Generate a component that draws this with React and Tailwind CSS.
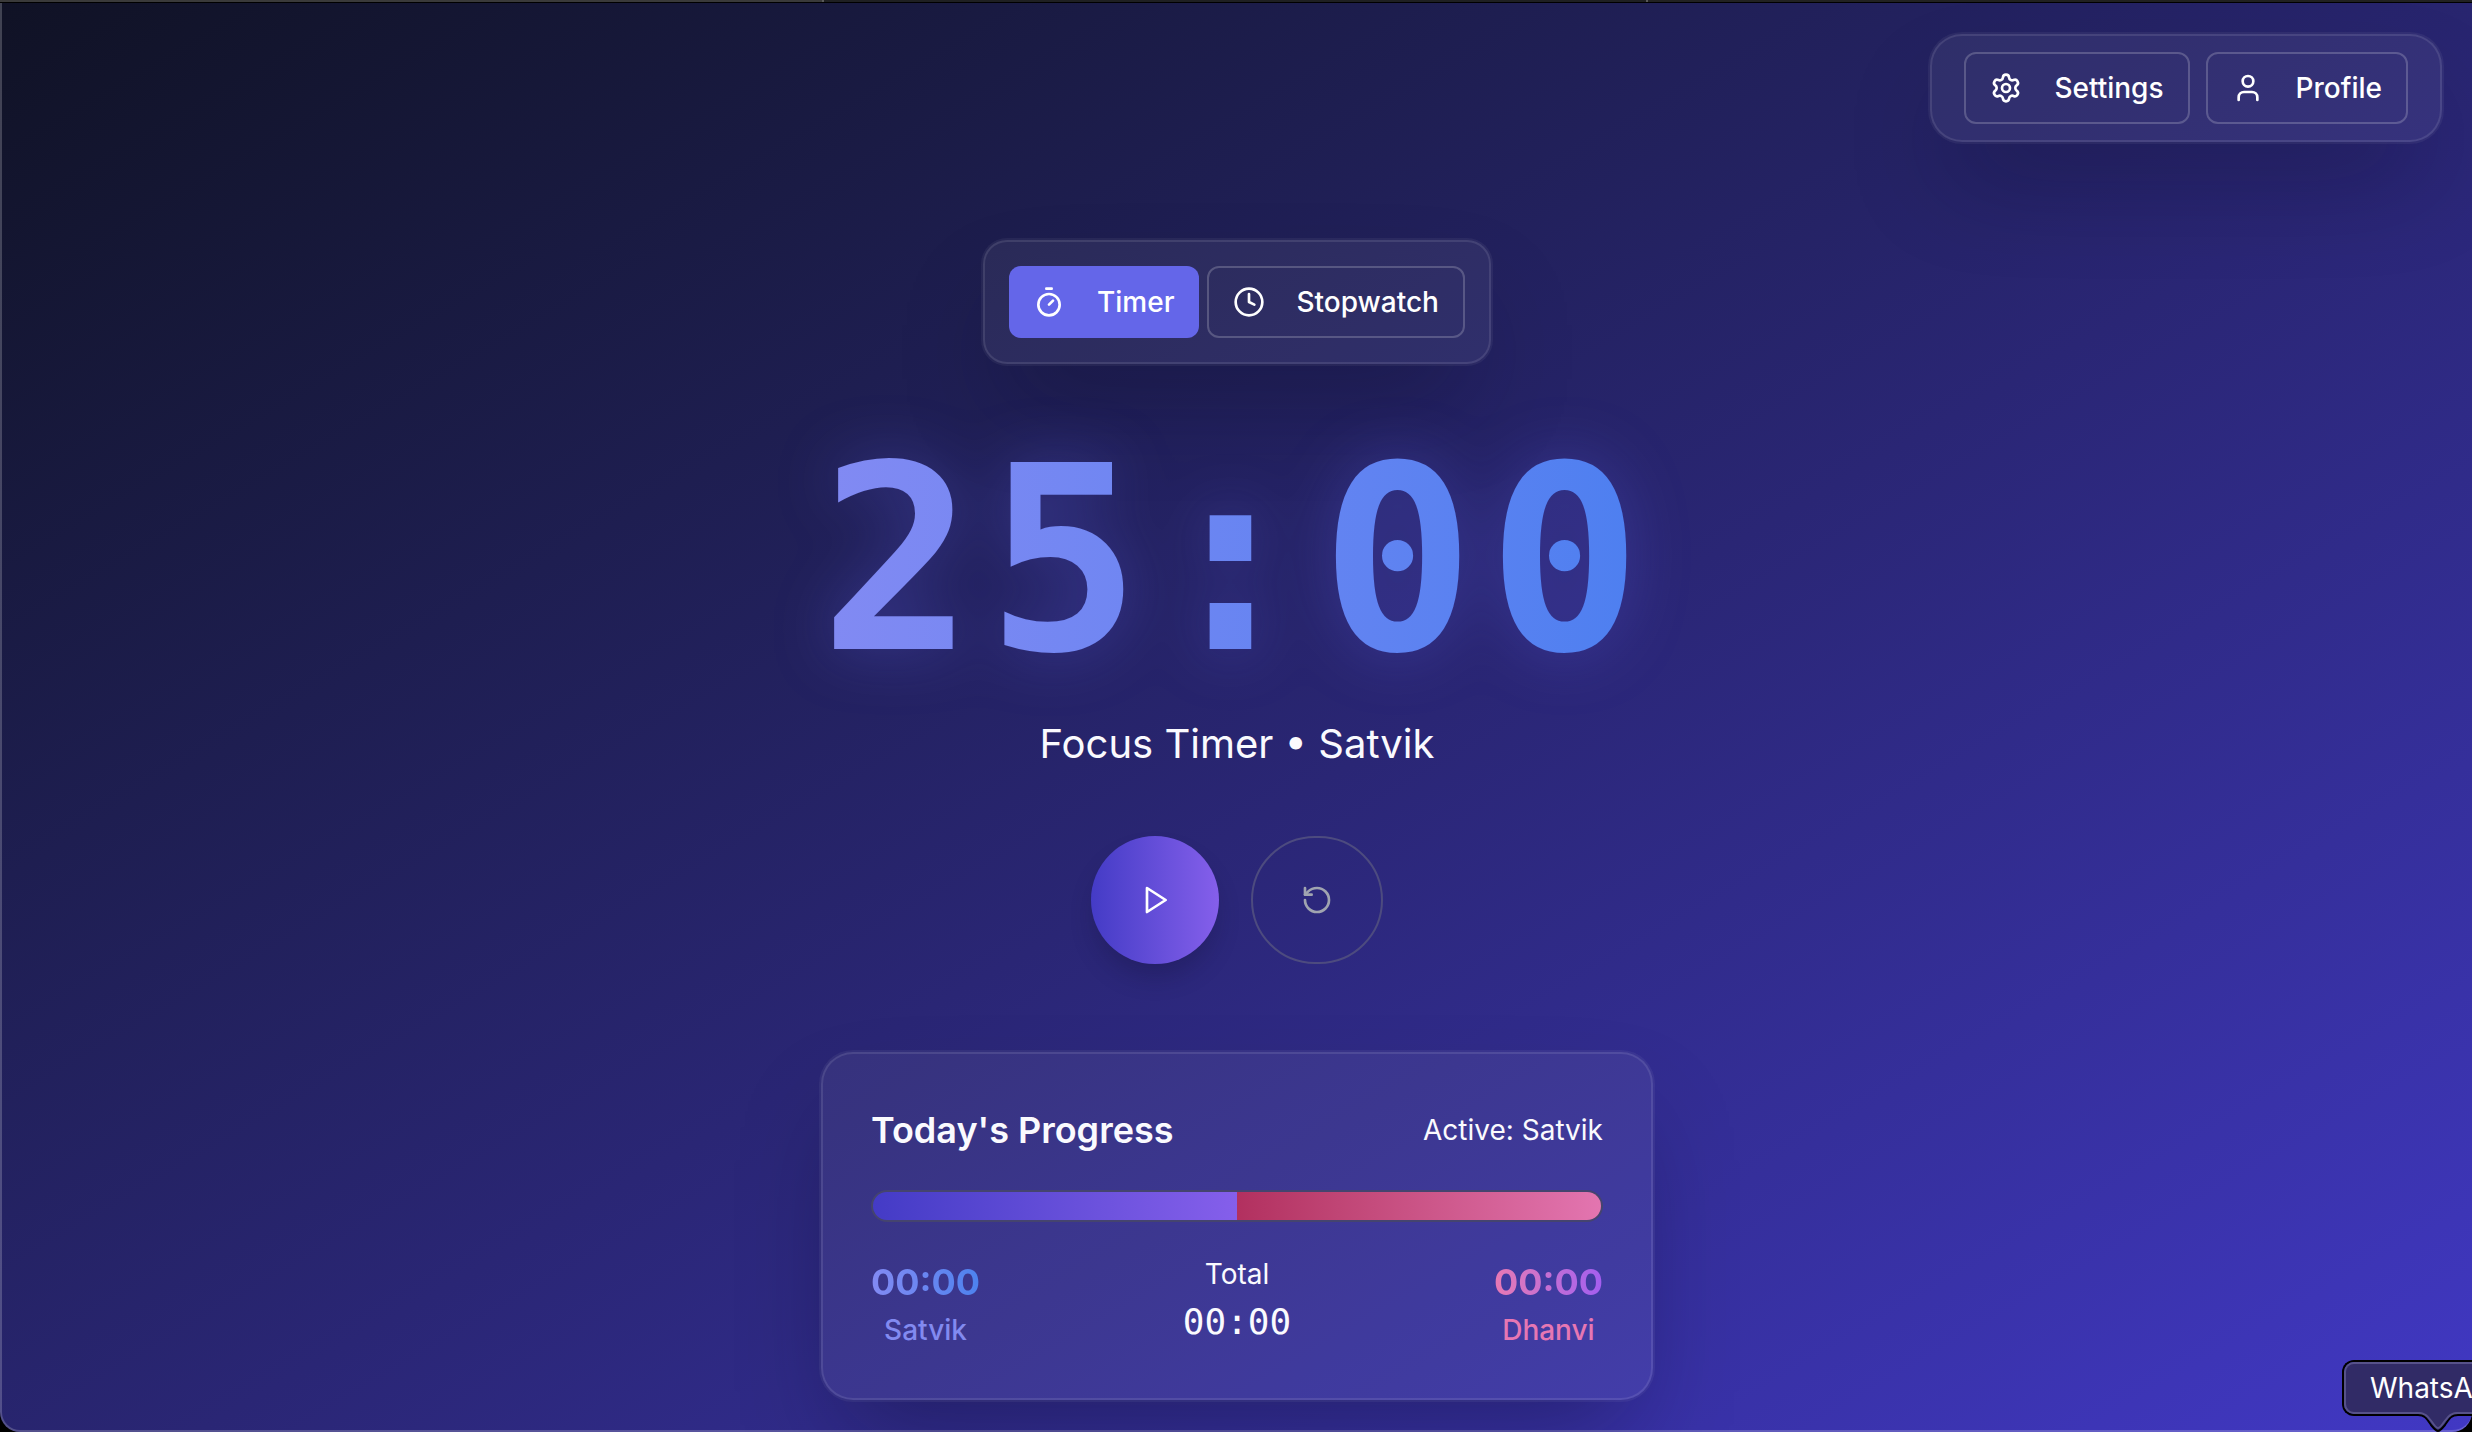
import { Settings, User, Timer, Clock, RotateCcw } from "lucide-react";

const glass =
  "border-2 border-white/10 bg-white/6 shadow-[0_0_0_2px_rgba(255,255,255,0.05),0_50px_100px_-24px_rgba(10,8,30,0.35)]";

function OutlineButton({ icon: Icon, children }) {
  return (
    <button
      type="button"
      className="flex h-[72px] items-center gap-8 rounded-xl border-2 border-white/20 px-6 text-[28px] leading-10 font-medium text-white"
    >
      <Icon size={32} strokeWidth={2} aria-hidden="true" />
      {children}
    </button>
  );
}

function Header() {
  return (
    <header className="flex justify-end px-[30px] pt-[31px]">
      <nav className={`flex gap-4 rounded-[32px] px-8 py-4 ${glass}`}>
        <OutlineButton icon={Settings}>Settings</OutlineButton>
        <OutlineButton icon={User}>Profile</OutlineButton>
      </nav>
    </header>
  );
}

function ModeSwitch() {
  return (
    <div className={`flex gap-2 rounded-3xl p-6 ${glass}`}>
      <button
        type="button"
        aria-pressed="true"
        className="flex h-[72px] items-center gap-8 rounded-xl bg-[#6466e9] px-6 text-[28px] leading-10 font-medium text-white"
      >
        <Timer size={32} strokeWidth={2} aria-hidden="true" />
        Timer
      </button>
      <OutlineButton icon={Clock}>Stopwatch</OutlineButton>
    </div>
  );
}

function Controls() {
  return (
    <div className="flex gap-8">
      <button
        type="button"
        aria-label="Start"
        className="flex size-32 items-center justify-center rounded-full bg-linear-to-r from-[#443bc6] to-[#855feb] text-white shadow-[0_16px_24px_-4px_rgba(20,16,60,0.3)]"
      >
        <svg
          className="size-8"
          viewBox="0 0 24 24"
          fill="none"
          stroke="currentColor"
          strokeWidth="2"
          strokeLinecap="round"
          strokeLinejoin="round"
          aria-hidden="true"
        >
          <polygon points="6 3 20 12 6 21 6 3" />
        </svg>
      </button>
      <button
        type="button"
        aria-label="Reset"
        className="flex h-32 w-33 items-center justify-center rounded-full border-2 border-[#4d4b7f] text-[#a0a4b0]"
      >
        <RotateCcw size={32} strokeWidth={2} aria-hidden="true" />
      </button>
    </div>
  );
}

function ProgressCard() {
  return (
    <section className={`w-full max-w-[832px] rounded-[32px] p-12 ${glass}`}>
      <div className="flex items-center justify-between">
        <h2 className="text-4xl leading-14 font-semibold">Today's Progress</h2>
        <p className="text-[28px] leading-10">Active: Satvik</p>
      </div>
      <div className="mt-8 flex h-8 overflow-hidden rounded-full border-2 border-[#45446f] bg-[#45446f]">
        <div className="w-1/2 bg-linear-to-r from-[#443bc6] to-[#855feb]" />
        <div className="w-1/2 bg-linear-to-r from-[#b2305f] to-[#e375b0]" />
      </div>
      <div className="mt-8 flex justify-between text-center">
        <div>
          <p className="bg-linear-to-r from-[#828af3] to-[#4c82ee] bg-clip-text text-4xl leading-14 font-bold text-transparent">
            00:00
          </p>
          <p className="text-[28px] leading-10 font-medium text-[#828af0]">Satvik</p>
        </div>
        <div>
          <p className="text-[28px] leading-10">Total</p>
          <p className="font-['DejaVu_Sans_Mono',monospace] text-4xl leading-14">00:00</p>
        </div>
        <div>
          <p className="bg-linear-to-r from-[#e879b3] to-[#a35df0] bg-clip-text text-4xl leading-14 font-bold text-transparent">
            00:00
          </p>
          <p className="text-[28px] leading-10 font-medium text-[#e677b3]">Dhanvi</p>
        </div>
      </div>
    </section>
  );
}

function DockTooltip() {
  return (
    <div className="absolute right-0 bottom-0 w-[130px]">
      <div role="tooltip" className="rounded-l-xl border-2 border-r-0 border-black">
        <div className="rounded-l-[10px] border-2 border-r-0 border-[#57528a] bg-[#312b66] pl-6 text-[28px] leading-12 whitespace-nowrap text-white">
          WhatsA
        </div>
      </div>
      <svg className="-mt-1 ml-[76px] block" width="40" height="20" viewBox="0 0 40 20" aria-hidden="true">
        <path d="M0 0C7 0 9 5 13 11Q18 19 20 19T27 11C31 5 33 0 40 0Z" fill="#312b66" />
        <path d="M0 3C7 3 9 7 13 13Q18 19 20 19T27 13C31 7 33 3 40 3" fill="none" stroke="#000" strokeWidth="2" />
        <path d="M0 1C8 1 10 5 14 10Q18 16 20 16T26 10C30 5 32 1 40 1" fill="none" stroke="#57528a" strokeWidth="2" />
      </svg>
    </div>
  );
}

export default function App() {
  return (
    <div className="relative flex min-h-screen flex-col overflow-hidden bg-black font-['Inter',sans-serif] text-[#fafafe]">
      <div className="flex h-[2px]">
        <div className="w-1/3 border-r-2 border-[#5a5a5a] bg-[#3a3a3a]" />
        <div className="w-1/3 border-r-2 border-[#5a5a5a] bg-[#1f2022]" />
        <div className="w-1/3 bg-[#222222]" />
      </div>
      <div className="mt-px flex grow flex-col rounded-b-[20px] border-b-2 border-l-2 border-white/20 bg-linear-to-br from-[#101225] via-[#2a2675] via-54% to-[#4138c4] bg-origin-border">
        <Header />
        <main className="flex flex-col items-center px-8 pt-[98px] pb-[30px]">
          <ModeSwitch />
          <h1 className="mt-17 bg-linear-to-r from-[#828af3] to-[#4c7ff0] bg-clip-text font-['DejaVu_Sans_Mono',monospace] text-[256px] leading-[256px] font-bold tracking-wider text-transparent drop-shadow-[0_0_30px_rgba(99,102,241,0.3)]">
            25:00
          </h1>
          <p className="mt-7 mb-16 text-[40px] leading-14">Focus Timer • Satvik</p>
          <Controls />
          <div className="mt-22 flex w-full justify-center">
            <ProgressCard />
          </div>
        </main>
      </div>
      <DockTooltip />
    </div>
  );
}
